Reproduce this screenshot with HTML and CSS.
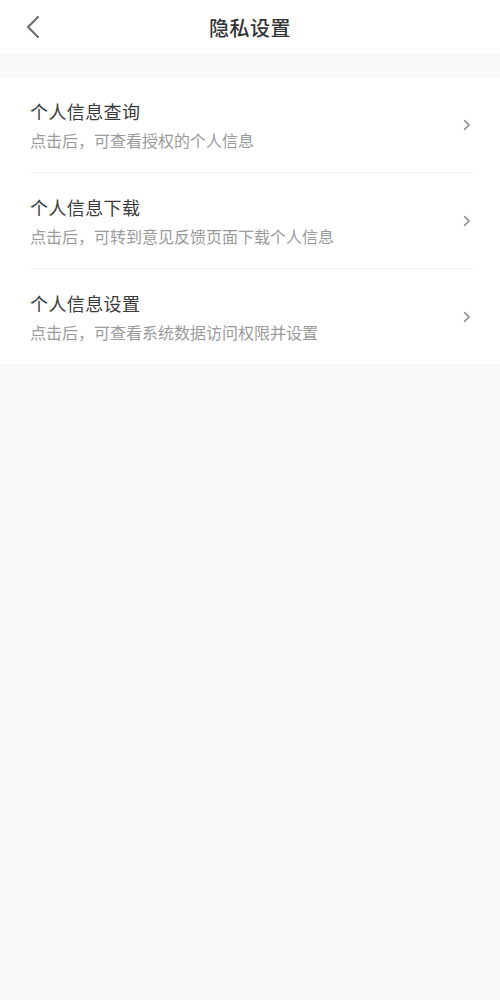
FILE: index.html
```html
<!DOCTYPE html>
<html lang="zh-CN">
<head>
<meta charset="utf-8">
<title>隐私设置</title>
<link rel="stylesheet" href="styles.css">
</head>
<body>
<header class="nav">
  <span class="back">
    <svg width="16" height="24" viewBox="0 0 16 24"><path d="M13 2 L3 12 L13 22" fill="none" stroke="#707070" stroke-width="2.2" stroke-linecap="round" stroke-linejoin="round"/></svg>
  </span>
  <h1 class="title">隐私设置</h1>
</header>
<main class="list">
  <div class="row">
    <div class="text">
      <div class="row-title">个人信息查询</div>
      <div class="row-sub">点击后，可查看授权的个人信息</div>
    </div>
    <svg class="arrow" width="8" height="12" viewBox="0 0 8 12"><path d="M1.5 1.5 L6 6 L1.5 10.5" fill="none" stroke="#8a8a8a" stroke-width="1.6" stroke-linecap="round" stroke-linejoin="round"/></svg>
  </div>
  <div class="row">
    <div class="text">
      <div class="row-title">个人信息下载</div>
      <div class="row-sub">点击后，可转到意见反馈页面下载个人信息</div>
    </div>
    <svg class="arrow" width="8" height="12" viewBox="0 0 8 12"><path d="M1.5 1.5 L6 6 L1.5 10.5" fill="none" stroke="#8a8a8a" stroke-width="1.6" stroke-linecap="round" stroke-linejoin="round"/></svg>
  </div>
  <div class="row">
    <div class="text">
      <div class="row-title">个人信息设置</div>
      <div class="row-sub">点击后，可查看系统数据访问权限并设置</div>
    </div>
    <svg class="arrow" width="8" height="12" viewBox="0 0 8 12"><path d="M1.5 1.5 L6 6 L1.5 10.5" fill="none" stroke="#8a8a8a" stroke-width="1.6" stroke-linecap="round" stroke-linejoin="round"/></svg>
  </div>
</main>
</body>
</html>
```
FILE: styles.css
```css
html, body {
  margin: 0;
  padding: 0;
  background: #f9f9f9;
  font-family: "Noto Sans CJK SC", "Noto Sans", sans-serif;
}
.nav {
  box-sizing: border-box;
  height: 53px;
  padding-top: 2px;
  background: #ffffff;
  display: flex;
  align-items: center;
  justify-content: center;
  position: relative;
}
.back {
  position: absolute;
  left: 25px;
  top: 15px;
  display: flex;
}
.title {
  margin: 0;
  font-size: 20px;
  font-weight: 500;
  color: #333333;
  line-height: 51px;
  letter-spacing: 0.5px;
}
.list {
  margin-top: 24px;
  background: #ffffff;
  padding: 0 25px 0 30px;
}
.row {
  display: flex;
  align-items: center;
  justify-content: space-between;
  padding: 22px 0 22px;
  border-bottom: 1px solid #f1f1f1;
}
.row:last-child {
  border-bottom: none;
}
.text {
  display: flex;
  flex-direction: column;
  gap: 7px;
}
.row-title {
  font-size: 18px;
  line-height: 24px;
  color: #3a3a3a;
  letter-spacing: 0.4px;
}
.row-sub {
  font-size: 16px;
  line-height: 20px;
  color: #9a9a9a;
}
.arrow {
  margin-right: 4px;
}
```
